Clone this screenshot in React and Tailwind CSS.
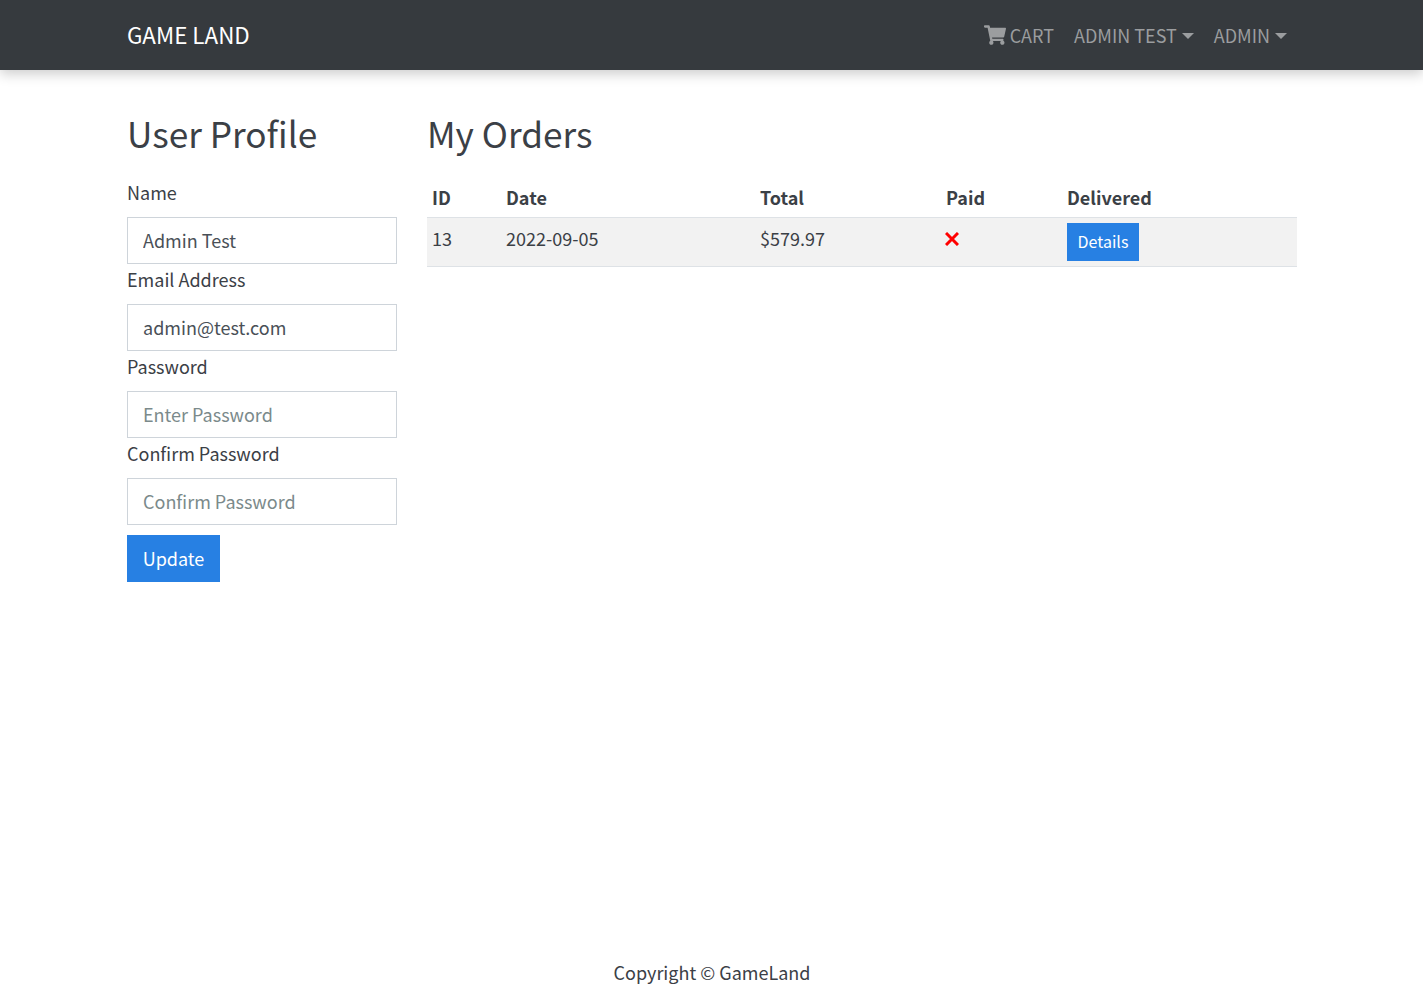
import { FaShoppingCart } from 'react-icons/fa';

const font = "font-['Noto_Sans_CJK_SC','Noto_Sans',sans-serif]";

const Field = ({ label, value, placeholder }) => (
  <div>
    <label className="block h-[40px] pt-[2px] text-[18px] leading-[27px] text-[#3b4046]">{label}</label>
    <input
      readOnly
      value={value}
      placeholder={placeholder}
      className="block h-[47px] w-full border border-[#ced4da] bg-white px-[15px] pb-[2px] text-[18px] text-[#495057] placeholder:text-[#7b8a8b]"
    />
  </div>
);

const Caret = () => (
  <span className="ml-[5px] inline-block h-0 w-0 border-x-[6px] border-t-[6px] border-x-transparent border-t-current align-[4px]" />
);

const Cross = () => (
  <svg viewBox="0 0 14 14" className="-ml-[1px] block h-[14px] w-[14px]" fill="none" stroke="#ff0000" strokeWidth="3">
    <path d="M1 1 L13 13 M13 1 L1 13" />
  </svg>
);

export default function App() {
  return (
    <div className={`flex min-h-[1007px] flex-col bg-white ${font}`}>
      <header className="h-[70px] bg-[#363a3e] shadow-[0_4px_12px_rgba(0,0,0,0.2)]">
        <nav className="mx-auto flex h-full w-[1199px] items-center justify-between px-[15px]">
          <a className="-mt-[1px] text-[22.4px] text-white">GAME LAND</a>
          <div className="flex items-center text-[18px] text-[#9b9d9f]">
            <a className="flex items-center"><FaShoppingCart className="mr-[4px] ml-[1px] h-[20px] w-[22px]" />CART</a>
            <a className="ml-[20px]">ADMIN TEST<Caret /></a>
            <a className="ml-[20px] mr-[9px]">ADMIN<Caret /></a>
          </div>
        </nav>
      </header>

      <main className="mx-auto flex w-[1199px] flex-1 pt-[39px]">
        <section className="w-[300px] shrink-0 px-[15px]">
          <h1 className="mb-[20px] text-[35.2px] leading-[48px] text-[#3b4046]">User Profile</h1>
          <Field label="Name" value="Admin Test" />
          <Field label="Email Address" value="admin@test.com" />
          <Field label="Password" placeholder="Enter Password" />
          <Field label="Confirm Password" placeholder="Confirm Password" />
          <button className="mt-[10px] h-[47px] w-[93px] bg-[#2780e3] text-[18px] text-white">Update</button>
        </section>

        <section className="w-[900px] shrink-0 px-[15px]">
          <h1 className="mb-[19px] text-[35.2px] leading-[48px] text-[#3b4046]">My Orders</h1>
          <table className="w-[870px] table-fixed border-collapse text-left text-[18px] text-[#3b4046]">
            <thead>
              <tr className="border-b border-[#dee2e6]">
                <th className="h-[41px] w-[74px] px-[5px] pt-[3px] font-bold">ID</th>
                <th className="w-[254px] px-[5px] pt-[3px] font-bold">Date</th>
                <th className="w-[186px] px-[5px] pt-[3px] font-bold">Total</th>
                <th className="w-[121px] px-[5px] pt-[3px] font-bold">Paid</th>
                <th className="px-[5px] pt-[3px] font-bold">Delivered</th>
              </tr>
            </thead>
            <tbody>
              <tr className="border-b border-[#dee2e6] bg-[#f2f2f2]">
                <td className="h-[49px] px-[5px] pt-[7px] align-top">13</td>
                <td className="px-[5px] pt-[7px] align-top">2022-09-05</td>
                <td className="px-[5px] pt-[7px] align-top">$579.97</td>
                <td className="px-[5px] pt-[14px] align-top"><Cross /></td>
                <td className="px-[5px] pt-[5px] align-top">
                  <button className="h-[38px] w-[72px] bg-[#2780e3] pb-[2px] text-[16px] text-white">Details</button>
                </td>
              </tr>
            </tbody>
          </table>
        </section>
      </main>

      <footer className="h-[64px] pl-[1px] pt-[16px] text-center text-[18px] text-[#3b4046]">Copyright © GameLand</footer>
    </div>
  );
}
